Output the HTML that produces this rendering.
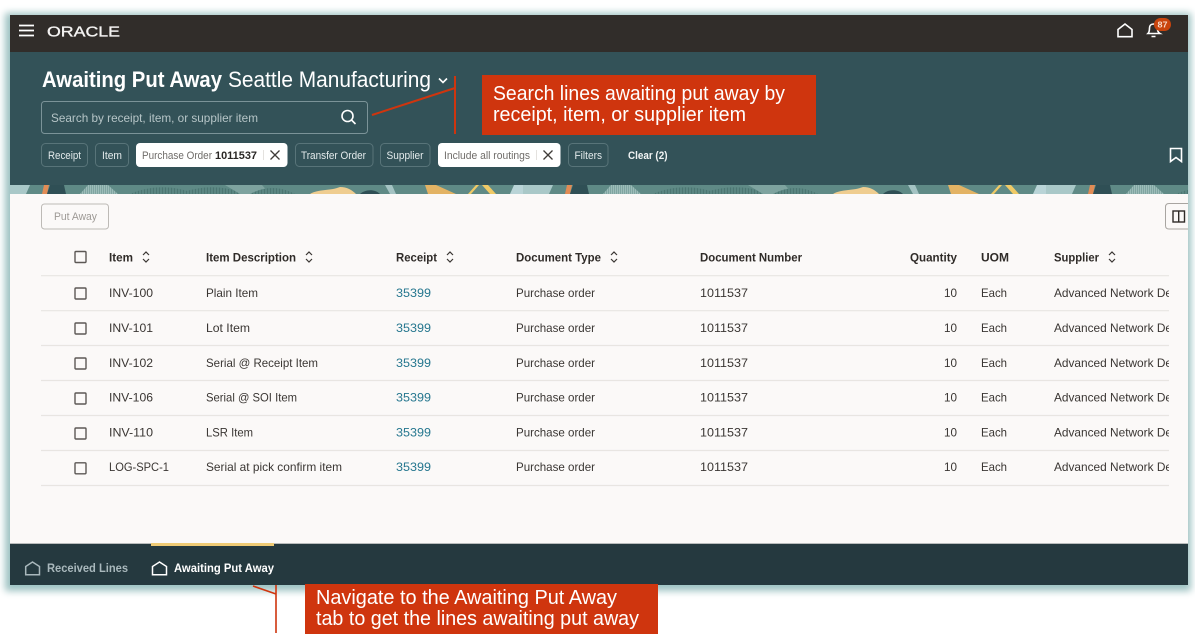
<!DOCTYPE html>
<html lang="en">
<head>
<meta charset="utf-8">
<title>Awaiting Put Away</title>
<style>
html,body{margin:0;padding:0;width:1195px;height:635px;overflow:hidden;background:#fff}
#card{position:absolute;left:10px;top:15px;width:1178px;height:570px;background:#fbf9f8;box-shadow:-1px 2px 7px 4px #9dc2c2}
svg{position:absolute;left:0;top:0}
text{font-family:"Liberation Sans",sans-serif;font-size:12px;fill:#3a3633}
.h{font-weight:bold;fill:#2f2b28}
.l{fill:#26778f}
.c{font-size:11px;fill:#e4ebec}
.w{font-size:11px;fill:#6f6c69}
.co{font-size:20px;fill:#fff}
.s{fill:none;stroke:#fff;stroke-width:1.6}
.sort{fill:none;stroke:#3a3633;stroke-width:1.2}
.cb{fill:none;stroke:#5c5855;stroke-width:1.4}
.ln{stroke:#e8e5e2;stroke-width:1.2}
.chip{fill:none;stroke:#587479;stroke-width:1}
</style>
</head>
<body>
<div id="card"></div>
<svg width="1195" height="635" viewBox="0 0 1195 635" xmlns="http://www.w3.org/2000/svg">
<defs>
<clipPath id="cl"><rect x="10" y="185" width="1178" height="9"/></clipPath>
<pattern id="hatch" width="2" height="9" patternUnits="userSpaceOnUse"><rect width="2" height="9" fill="#7fa5a1"/><rect width="1" height="9" fill="#9dbcb9"/></pattern>
<pattern id="fine" width="3" height="9" patternUnits="userSpaceOnUse"><rect width="3" height="9" fill="#5a8682"/><rect width="1" height="9" fill="#4c7672"/></pattern>
<g id="tile">
<rect x="0" y="185" width="523" height="9" fill="#5f8a86"/>
<path d="M0 185H30L26 194H0Z" fill="#a9c8c8"/>
<path d="M44 185H49L47 194H42Z" fill="#e28c55"/>
<path d="M50 185H64L66 194H47Z" fill="#2f4f55"/>
<path d="M80 194L88 185H108L118 194Z" fill="url(#hatch)"/>
<path d="M130 194C150 185 175 185 195 194Z" fill="url(#fine)"/>
<path d="M178 194C200 185 225 185 245 194Z" fill="url(#fine)"/>
<path d="M225 185H262L270 194H240Z" fill="#7ea39f"/>
<path d="M250 194C265 186 280 186 295 194Z" fill="url(#fine)"/>
<path d="M310 194C318 189 330 191 340 187C347 187 352 190 356 194Z" fill="#efcd90"/>
<path d="M360 194C364 190 374 188 380 194Z" fill="#2f4f55"/>
<path d="M385 185H392L396 194H390Z" fill="#a4c3c3"/>
<path d="M425 185H436L456 194H428Z" fill="#e3b364"/>
<path d="M476 185H479L471 194H468Z" fill="#f0ca66"/>
<path d="M482 185H488L496 194H490Z" fill="#f0ca66"/>
<path d="M514 185H538L542 194H510Z" fill="#b9d4d7"/>
</g>
</defs>

<!-- top bar -->
<rect x="10" y="15" width="1178" height="37" fill="#312d2a"/>
<path d="M19 25.500H34M19 30.500H34M19 35.500H34" stroke="#fff" stroke-width="1.700" fill="none"/>
<text x="47" y="36.500" textLength="73" lengthAdjust="spacingAndGlyphs" style="font-size:15px;fill:#f4f3f2;stroke:#f4f3f2;stroke-width:.35">ORACLE</text>
<path class="s" d="M1118 36.700V29.500L1125 24L1132 29.500V36.700Z"/>
<path class="s" d="M1148 33.500C1149.500 32 1149.500 30 1149.500 28C1149.500 25.500 1151 24 1153.500 24C1156 24 1157.500 25.500 1157.500 28C1157.500 30 1157.500 32 1160 33.500ZM1151.500 36.500H1155.500"/>
<rect x="1154" y="18" width="17" height="13" rx="6.500" fill="#c9440d"/>
<text x="1157.500" y="27.500" textLength="10" lengthAdjust="spacingAndGlyphs" style="font-size:8.500px;font-weight:bold;fill:#f7d9c8">87</text>

<!-- header -->
<rect x="10" y="52" width="1178" height="133" fill="#335258"/>
<text x="42" y="87" textLength="180" lengthAdjust="spacingAndGlyphs" style="font-size:22px;font-weight:bold;fill:#fff">Awaiting Put Away</text>
<text x="228" y="87" textLength="203" lengthAdjust="spacingAndGlyphs" style="font-size:22px;fill:#fff">Seattle Manufacturing</text>
<path d="M439 78.500L443 82.500L447 78.500" fill="none" stroke="#fff" stroke-width="1.600"/>
<rect x="41.500" y="101.500" width="326" height="32" rx="3" fill="none" stroke="#7b9398"/>
<text x="51" y="122" textLength="207" lengthAdjust="spacingAndGlyphs" style="fill:#b6c5c7">Search by receipt, item, or supplier item</text>
<circle cx="347.500" cy="116" r="5.500" fill="none" stroke="#fff" stroke-width="1.600"/>
<path d="M351.500 120L355.500 124" stroke="#fff" stroke-width="1.600"/>

<!-- chips -->
<rect class="chip" x="41.500" y="143.500" width="46" height="23" rx="4"/>
<text class="c" x="48" y="159" textLength="33" lengthAdjust="spacingAndGlyphs">Receipt</text>
<rect class="chip" x="95.500" y="143.500" width="33" height="23" rx="4"/>
<text class="c" x="102" y="159" textLength="20" lengthAdjust="spacingAndGlyphs">Item</text>
<rect x="136" y="143" width="151.500" height="24" rx="4" fill="#fff"/>
<text class="w" x="142" y="159" textLength="70" lengthAdjust="spacingAndGlyphs">Purchase Order</text>
<text x="215" y="159" textLength="42" lengthAdjust="spacingAndGlyphs" style="font-size:11px;font-weight:bold;fill:#2a2725">1011537</text>
<path d="M263.500 150V160" stroke="#e4e2df"/>
<path d="M270.500 150.500L279.500 159.500M279.500 150.500L270.500 159.500" stroke="#3f3c39" stroke-width="1.300" fill="none"/>
<rect class="chip" x="295.500" y="143.500" width="77.500" height="23" rx="4"/>
<text class="c" x="301" y="159" textLength="65" lengthAdjust="spacingAndGlyphs">Transfer Order</text>
<rect class="chip" x="380.500" y="143.500" width="49.500" height="23" rx="4"/>
<text class="c" x="386.500" y="159" textLength="37" lengthAdjust="spacingAndGlyphs">Supplier</text>
<rect x="438" y="143" width="122.500" height="24" rx="4" fill="#fff"/>
<text class="w" x="444" y="159" textLength="86" lengthAdjust="spacingAndGlyphs">Include all routings</text>
<path d="M536.500 150V160" stroke="#e4e2df"/>
<path d="M543.500 150.500L552.500 159.500M552.500 150.500L543.500 159.500" stroke="#3f3c39" stroke-width="1.300" fill="none"/>
<rect class="chip" x="568.500" y="143.500" width="39.500" height="23" rx="4"/>
<text class="c" x="574.500" y="159" textLength="27.500" lengthAdjust="spacingAndGlyphs">Filters</text>
<text class="c" x="628" y="159" textLength="39.500" lengthAdjust="spacingAndGlyphs" style="font-weight:bold;fill:#f2f5f5">Clear (2)</text>
<path class="s" d="M1170.500 148.500H1181.500V161.500L1176 157.500L1170.500 161.500Z"/>

<!-- banner stripe -->
<g clip-path="url(#cl)">
<use href="#tile" x="0"/>
<use href="#tile" x="523"/>
<use href="#tile" x="1046"/>
</g>

<!-- toolbar -->
<rect x="41.500" y="204" width="67" height="25" rx="3" fill="none" stroke="#bdbab6"/>
<text x="54" y="220" textLength="43" lengthAdjust="spacingAndGlyphs" style="font-size:11px;fill:#9d9995">Put Away</text>
<path d="M1188 203.500H1169C1166.800 203.500 1165.500 204.800 1165.500 207V225.500C1165.500 227.700 1166.800 229 1169 229H1188" fill="none" stroke="#a8a5a1"/>
<rect x="1173" y="211" width="11.500" height="11" fill="none" stroke="#2f2b28" stroke-width="1.400"/>
<path d="M1178.700 211V222" stroke="#2f2b28" stroke-width="1.400"/>

<!-- table header -->
<rect class="cb" x="75" y="251.500" width="11" height="11" rx="1"/>
<text class="h" x="109" y="261.500" textLength="24" lengthAdjust="spacingAndGlyphs">Item</text>
<path class="sort" d="M143 255L146 252L149 255M143 259L146 262L149 259"/>
<text class="h" x="206" y="261.500" textLength="90" lengthAdjust="spacingAndGlyphs">Item Description</text>
<path class="sort" d="M306 255L309 252L312 255M306 259L309 262L312 259"/>
<text class="h" x="396" y="261.500" textLength="41" lengthAdjust="spacingAndGlyphs">Receipt</text>
<path class="sort" d="M447 255L450 252L453 255M447 259L450 262L453 259"/>
<text class="h" x="516" y="261.500" textLength="85" lengthAdjust="spacingAndGlyphs">Document Type</text>
<path class="sort" d="M611 255L614 252L617 255M611 259L614 262L617 259"/>
<text class="h" x="700" y="261.500" textLength="102" lengthAdjust="spacingAndGlyphs">Document Number</text>
<text class="h" x="910" y="261.500" textLength="47" lengthAdjust="spacingAndGlyphs">Quantity</text>
<text class="h" x="981" y="261.500" textLength="28" lengthAdjust="spacingAndGlyphs">UOM</text>
<text class="h" x="1054" y="261.500" textLength="45" lengthAdjust="spacingAndGlyphs">Supplier</text>
<path class="sort" d="M1109 255L1112 252L1115 255M1109 259L1112 262L1115 259"/>

<path class="ln" d="M41 275.700H1169M41 310.700H1169M41 345.500H1169M41 380.500H1169M41 415.500H1169M41 450.500H1169M41 485.500H1169"/>

<clipPath id="sup"><rect x="1050" y="280" width="119" height="200"/></clipPath>

<!-- row 1 -->
<rect class="cb" x="75" y="288" width="11" height="11" rx="1"/>
<text x="109" y="297.200" textLength="44" lengthAdjust="spacingAndGlyphs">INV-100</text>
<text x="206" y="297.200" textLength="52" lengthAdjust="spacingAndGlyphs">Plain Item</text>
<text class="l" x="396" y="297.200" textLength="35" lengthAdjust="spacingAndGlyphs">35399</text>
<text x="516" y="297.200" textLength="79" lengthAdjust="spacingAndGlyphs">Purchase order</text>
<text x="700" y="297.200" textLength="48" lengthAdjust="spacingAndGlyphs">1011537</text>
<text x="944" y="297.200" textLength="13" lengthAdjust="spacingAndGlyphs">10</text>
<text x="981" y="297.200" textLength="26" lengthAdjust="spacingAndGlyphs">Each</text>
<text x="1054" y="297.200" clip-path="url(#sup)" textLength="145" lengthAdjust="spacingAndGlyphs">Advanced Network Devices</text>

<!-- row 2 -->
<rect class="cb" x="75" y="323" width="11" height="11" rx="1"/>
<text x="109" y="332" textLength="44" lengthAdjust="spacingAndGlyphs">INV-101</text>
<text x="206" y="332" textLength="44" lengthAdjust="spacingAndGlyphs">Lot Item</text>
<text class="l" x="396" y="332" textLength="35" lengthAdjust="spacingAndGlyphs">35399</text>
<text x="516" y="332" textLength="79" lengthAdjust="spacingAndGlyphs">Purchase order</text>
<text x="700" y="332" textLength="48" lengthAdjust="spacingAndGlyphs">1011537</text>
<text x="944" y="332" textLength="13" lengthAdjust="spacingAndGlyphs">10</text>
<text x="981" y="332" textLength="26" lengthAdjust="spacingAndGlyphs">Each</text>
<text x="1054" y="332" clip-path="url(#sup)" textLength="145" lengthAdjust="spacingAndGlyphs">Advanced Network Devices</text>

<!-- row 3 -->
<rect class="cb" x="75" y="358" width="11" height="11" rx="1"/>
<text x="109" y="366.800" textLength="44" lengthAdjust="spacingAndGlyphs">INV-102</text>
<text x="206" y="366.800" textLength="112" lengthAdjust="spacingAndGlyphs">Serial @ Receipt Item</text>
<text class="l" x="396" y="366.800" textLength="35" lengthAdjust="spacingAndGlyphs">35399</text>
<text x="516" y="366.800" textLength="79" lengthAdjust="spacingAndGlyphs">Purchase order</text>
<text x="700" y="366.800" textLength="48" lengthAdjust="spacingAndGlyphs">1011537</text>
<text x="944" y="366.800" textLength="13" lengthAdjust="spacingAndGlyphs">10</text>
<text x="981" y="366.800" textLength="26" lengthAdjust="spacingAndGlyphs">Each</text>
<text x="1054" y="366.800" clip-path="url(#sup)" textLength="145" lengthAdjust="spacingAndGlyphs">Advanced Network Devices</text>

<!-- row 4 -->
<rect class="cb" x="75" y="393" width="11" height="11" rx="1"/>
<text x="109" y="401.600" textLength="44" lengthAdjust="spacingAndGlyphs">INV-106</text>
<text x="206" y="401.600" textLength="91" lengthAdjust="spacingAndGlyphs">Serial @ SOI Item</text>
<text class="l" x="396" y="401.600" textLength="35" lengthAdjust="spacingAndGlyphs">35399</text>
<text x="516" y="401.600" textLength="79" lengthAdjust="spacingAndGlyphs">Purchase order</text>
<text x="700" y="401.600" textLength="48" lengthAdjust="spacingAndGlyphs">1011537</text>
<text x="944" y="401.600" textLength="13" lengthAdjust="spacingAndGlyphs">10</text>
<text x="981" y="401.600" textLength="26" lengthAdjust="spacingAndGlyphs">Each</text>
<text x="1054" y="401.600" clip-path="url(#sup)" textLength="145" lengthAdjust="spacingAndGlyphs">Advanced Network Devices</text>

<!-- row 5 -->
<rect class="cb" x="75" y="428" width="11" height="11" rx="1"/>
<text x="109" y="436.400" textLength="44" lengthAdjust="spacingAndGlyphs">INV-110</text>
<text x="206" y="436.400" textLength="47" lengthAdjust="spacingAndGlyphs">LSR Item</text>
<text class="l" x="396" y="436.400" textLength="35" lengthAdjust="spacingAndGlyphs">35399</text>
<text x="516" y="436.400" textLength="79" lengthAdjust="spacingAndGlyphs">Purchase order</text>
<text x="700" y="436.400" textLength="48" lengthAdjust="spacingAndGlyphs">1011537</text>
<text x="944" y="436.400" textLength="13" lengthAdjust="spacingAndGlyphs">10</text>
<text x="981" y="436.400" textLength="26" lengthAdjust="spacingAndGlyphs">Each</text>
<text x="1054" y="436.400" clip-path="url(#sup)" textLength="145" lengthAdjust="spacingAndGlyphs">Advanced Network Devices</text>

<!-- row 6 -->
<rect class="cb" x="75" y="462.800" width="11" height="11" rx="1"/>
<text x="109" y="471.200" textLength="60" lengthAdjust="spacingAndGlyphs">LOG-SPC-1</text>
<text x="206" y="471.200" textLength="136" lengthAdjust="spacingAndGlyphs">Serial at pick confirm item</text>
<text class="l" x="396" y="471.200" textLength="35" lengthAdjust="spacingAndGlyphs">35399</text>
<text x="516" y="471.200" textLength="79" lengthAdjust="spacingAndGlyphs">Purchase order</text>
<text x="700" y="471.200" textLength="48" lengthAdjust="spacingAndGlyphs">1011537</text>
<text x="944" y="471.200" textLength="13" lengthAdjust="spacingAndGlyphs">10</text>
<text x="981" y="471.200" textLength="26" lengthAdjust="spacingAndGlyphs">Each</text>
<text x="1054" y="471.200" clip-path="url(#sup)" textLength="145" lengthAdjust="spacingAndGlyphs">Advanced Network Devices</text>

<!-- bottom bar -->
<rect x="10" y="544" width="1178" height="41" fill="#25393f"/>
<rect x="10" y="543" width="1178" height="1" fill="#b9bcbc"/>
<rect x="151" y="543" width="123" height="3" fill="#efcb75"/>
<path d="M25.700 574.800V566.500L32.500 562L39.500 566.500V574.800Z" fill="none" stroke="#a9b8bc" stroke-width="1.500"/>
<text x="47" y="572" textLength="81" lengthAdjust="spacingAndGlyphs" style="font-weight:bold;fill:#a9b8bc">Received Lines</text>
<path d="M152.500 574.800V566.500L159.500 562L166.500 566.500V574.800Z" fill="none" stroke="#fff" stroke-width="1.500"/>
<text x="174" y="572" textLength="100" lengthAdjust="spacingAndGlyphs" style="font-weight:bold;fill:#fff">Awaiting Put Away</text>

<!-- callouts -->
<path d="M372 115L455 88M455 76V134" fill="none" stroke="#cf350e" stroke-width="2"/>
<rect x="482" y="75" width="334" height="60" fill="#cf350e"/>
<text class="co" x="493" y="100" textLength="292" lengthAdjust="spacingAndGlyphs">Search lines awaiting put away by</text>
<text class="co" x="493" y="121" textLength="253" lengthAdjust="spacingAndGlyphs">receipt, item, or supplier item</text>

<path d="M253 586L276 594M276 585V633" fill="none" stroke="#cf350e" stroke-width="1.600"/>
<rect x="305" y="584" width="353" height="50" fill="#cf350e"/>
<text class="co" x="316" y="604" textLength="301" lengthAdjust="spacingAndGlyphs">Navigate to the Awaiting Put Away</text>
<text class="co" x="316" y="625" textLength="323" lengthAdjust="spacingAndGlyphs">tab to get the lines awaiting put away</text>
</svg>
</body>
</html>
